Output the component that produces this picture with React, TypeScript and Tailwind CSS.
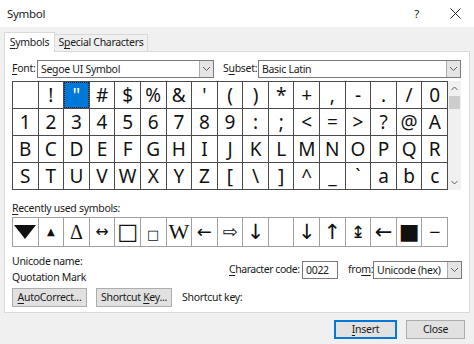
import React from "react";

const rows: string[][] = [
  [" ", "!", '"', "#", "$", "%", "&", "'", "(", ")", "*", "+", ",", "-", ".", "/", "0"],
  ["1", "2", "3", "4", "5", "6", "7", "8", "9", ":", ";", "<", "=", ">", "?", "@", "A"],
  ["B", "C", "D", "E", "F", "G", "H", "I", "J", "K", "L", "M", "N", "O", "P", "Q", "R"],
  ["S", "T", "U", "V", "W", "X", "Y", "Z", "[", "\\", "]", "^", "_", "`", "a", "b", "c"],
];

const arrow = "font-['DejaVu_Sans',sans-serif]";

// recently used symbols, with per-glyph tweaks
const recent: { ch: string; cls: string }[] = [
  { ch: "▼", cls: "" },
  { ch: "▲", cls: `text-[10px] ${arrow}` },
  { ch: "Δ", cls: "text-[20px] font-['Liberation_Serif',serif]" },
  { ch: "↔", cls: `text-[16px] ${arrow}` },
  { ch: "□", cls: `text-[22px] ${arrow}` },
  { ch: "□", cls: `text-[13px] mt-[5px] ${arrow}` },
  { ch: "W", cls: "text-[22px] font-['Liberation_Serif',serif]" },
  { ch: "←", cls: `text-[18px] ${arrow}` },
  { ch: "⇨", cls: `text-[18px] ${arrow}` },
  { ch: "↓", cls: `text-[21px] ${arrow}` },
  { ch: "", cls: "" },
  { ch: "↓", cls: `text-[21px] ${arrow}` },
  { ch: "↑", cls: `text-[21px] ${arrow}` },
  { ch: "↨", cls: `text-[17px] ${arrow}` },
  { ch: "←", cls: `text-[21px] ${arrow}` },
  { ch: "■", cls: `text-[22px] ${arrow}` },
  { ch: "−", cls: `text-[15px] ${arrow}` },
];

function Chevron() {
  return (
    <svg width="9" height="6" viewBox="0 0 9 6" fill="none">
      <path d="M1 1 L4.5 4.5 L8 1" stroke="#606060" strokeWidth="1" />
    </svg>
  );
}

function Select({ value, w }: { value: string; w: string }) {
  return (
    <div className={`flex h-[18px] ${w} border border-[#7a7a7a] bg-white`}>
      <div className="flex-1 pl-[3px] leading-[16px] whitespace-nowrap overflow-hidden">{value}</div>
      <div className="w-[14px] flex items-center justify-center bg-[#e5e5e5] border-l border-[#adadad]">
        <Chevron />
      </div>
    </div>
  );
}

function U({ children }: { children: React.ReactNode }) {
  return <span className="underline underline-offset-2">{children}</span>;
}

function Btn({ children, w, primary }: { children: React.ReactNode; w: string; primary?: boolean }) {
  return (
    <div
      className={`${w} h-[19px] flex items-center justify-center whitespace-nowrap bg-[#e1e1e1] ${
        primary ? "border-2 border-[#0078d7]" : "border border-[#adadad]"
      }`}
    >
      {children}
    </div>
  );
}

export default function App() {
  return (
    <div className="w-[474px] h-[344px] bg-[#f0f0f0] flex flex-col text-[10.5px] tracking-[-0.3px] text-[#1a1a1a] font-['Noto_Sans','Open_Sans',sans-serif] overflow-hidden whitespace-nowrap">
      {/* title bar */}
      <div className="h-[27px] bg-white flex items-center pl-[7px] pr-[13px] text-[11.5px]">
        <span>Symbol</span>
        <span className="ml-auto mr-[31px]">?</span>
        <svg width="11" height="11" viewBox="0 0 11 11">
          <path d="M0.5 0.5 L10.5 10.5 M10.5 0.5 L0.5 10.5" stroke="#222" strokeWidth="1" />
        </svg>
      </div>

      {/* tabs */}
      <div className="pt-[5px] px-[4px]">
        <div className="flex items-end h-[19px]">
          <div className="w-[51px] h-[20px] bg-white border border-b-0 border-[#d9d9d9] flex items-center justify-center relative z-10 -mb-px">
            <span>
              <U>S</U>ymbols
            </span>
          </div>
          <div className="w-[93px] h-[17px] bg-[#f0f0f0] border border-l-0 border-b-0 border-[#d9d9d9] flex items-center justify-center">
            <span>
              S<U>p</U>ecial Characters
            </span>
          </div>
        </div>

        {/* panel */}
        <div className="w-[466px] h-[262px] bg-white border border-[#d9d9d9] px-[7px] pt-[8px]">
          <div className="flex items-center h-[18px]">
            <span className="w-[25px]">
              <U>F</U>ont:
            </span>
            <Select value="Segoe UI Symbol" w="w-[177px]" />
            <span className="ml-[9px] w-[35px]">
              S<U>u</U>bset:
            </span>
            <Select value="Basic Latin" w="w-[203px]" />
          </div>

          {/* symbol grid */}
          <div className="flex mt-[3px]">
            <div className="w-[436px] grid grid-cols-[repeat(17,1fr)] gap-px p-px bg-[#4a4a4a]">
              {rows.flat().map((c, i) => (
                <div
                  key={i}
                  className={`h-[26px] flex items-center justify-center text-[19px] tracking-normal leading-none ${
                    i === 2
                      ? "bg-[#0078d7] text-white outline outline-1 outline-dotted outline-[#222] -outline-offset-1"
                      : "bg-white text-[#111]"
                  }`}
                >
                  {c}
                </div>
              ))}
            </div>
            <div className="w-[13px] bg-[#f0f0f0] flex flex-col items-center">
              <svg className="mt-[5px]" width="7" height="5" viewBox="0 0 7 5">
                <path d="M0.5 4 L3.5 1 L6.5 4" stroke="#606060" fill="none" />
              </svg>
              <div className="w-[11px] h-[13px] mt-[5px] bg-[#cdcdcd]" />
              <svg className="mt-auto mb-[5px]" width="7" height="5" viewBox="0 0 7 5">
                <path d="M0.5 1 L3.5 4 L6.5 1" stroke="#606060" fill="none" />
              </svg>
            </div>
          </div>

          <div className="mt-[11px] h-[15px] leading-[15px]">
            <U>R</U>ecently used symbols:
          </div>
          <div className="w-[436px] mt-[1px] grid grid-cols-[repeat(17,1fr)] gap-px p-px bg-[#a0a0a0]">
            {recent.map((r, i) => (
              <div
                key={i}
                className="h-[28px] bg-white flex items-center justify-center text-[#111] tracking-normal leading-none"
              >
                {i === 0 ? (
                  <svg width="22" height="14" viewBox="0 0 22 14">
                    <polygon points="0,0 22,0 11,14" fill="#111" />
                  </svg>
                ) : (
                  <span className={r.cls}>{r.ch}</span>
                )}
              </div>
            ))}
          </div>

          {/* unicode info */}
          <div className="flex mt-[6px]">
            <div className="w-[217px] flex flex-col">
              <div className="h-[16px] leading-[16px]">Unicode name:</div>
              <div className="h-[16px] leading-[16px]">Quotation Mark</div>
            </div>
            <div className="flex items-center h-[32px] pt-[1px]">
              <span className="w-[73px] tracking-[-0.45px]">
                <U>C</U>haracter code:
              </span>
              <div className="w-[36px] h-[18px] border border-[#7a7a7a] bg-white pl-[3px] leading-[16px]">0022</div>
              <span className="ml-[10px] w-[25px]">
                fro<U>m</U>:
              </span>
              <Select value="Unicode (hex)" w="w-[89px]" />
            </div>
          </div>

          <div className="flex items-center mt-[3px] h-[19px]">
            <Btn w="w-[75px]">
              <span>
                <U>A</U>utoCorrect...
              </span>
            </Btn>
            <div className="ml-[9px]">
              <Btn w="w-[76px]">
                <span>
                  Shortcut <U>K</U>ey...
                </span>
              </Btn>
            </div>
            <span className="ml-[10px]">Shortcut key:</span>
          </div>
        </div>
      </div>

      {/* footer buttons */}
      <div className="flex justify-end gap-[9px] pr-[9px] pt-[7px]">
        <Btn w="w-[63px]" primary>
          <span>
            <U>I</U>nsert
          </span>
        </Btn>
        <Btn w="w-[59px]">
          <span>Close</span>
        </Btn>
      </div>
    </div>
  );
}
